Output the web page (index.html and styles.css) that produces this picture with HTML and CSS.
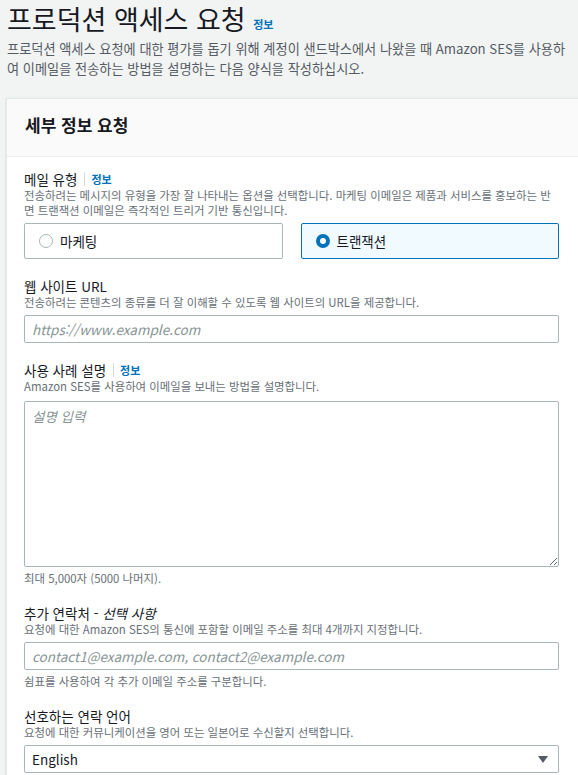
FILE: index.html
```html
<!DOCTYPE html>
<html lang="ko">
<head>
<meta charset="utf-8">
<title>프로덕션 액세스 요청</title>
<link rel="stylesheet" href="styles.css">
</head>
<body>
<div class="page">
  <header class="page-head">
    <h1 class="page-title">프로덕션 액세스 요청 <a class="info-link info-link--title" href="#">정보</a></h1>
    <p class="page-desc">프로덕션 액세스 요청에 대한 평가를 돕기 위해 계정이 샌드박스에서 나왔을 때 Amazon SES를 사용하여 이메일을 전송하는 방법을 설명하는 다음 양식을 작성하십시오.</p>
  </header>

  <section class="card">
    <div class="card-head">
      <h2 class="card-title">세부 정보 요청</h2>
    </div>
    <div class="card-body">
      <div class="field field--first">
        <div class="label-row"><span class="label">메일 유형</span><span class="divider"></span><a class="info-link" href="#">정보</a></div>
        <p class="desc">전송하려는 메시지의 유형을 가장 잘 나타내는 옵션을 선택합니다. 마케팅 이메일은 제품과 서비스를 홍보하는 반면 트랜잭션 이메일은 즉각적인 트리거 기반 통신입니다.</p>
        <div class="tiles">
          <label class="tile"><span class="radio"></span><span class="tile-text">마케팅</span></label>
          <label class="tile tile--on"><span class="radio radio--on"></span><span class="tile-text">트랜잭션</span></label>
        </div>
      </div>

      <div class="field">
        <div class="label-row"><span class="label">웹 사이트 URL</span></div>
        <p class="desc">전송하려는 콘텐츠의 종류를 더 잘 이해할 수 있도록 웹 사이트의 URL을 제공합니다.</p>
        <input class="input" type="text" placeholder="https://www.example.com">
      </div>

      <div class="field">
        <div class="label-row"><span class="label">사용 사례 설명</span><span class="divider"></span><a class="info-link" href="#">정보</a></div>
        <p class="desc">Amazon SES를 사용하여 이메일을 보내는 방법을 설명합니다.</p>
        <textarea class="textarea" placeholder="설명 입력"></textarea>
        <p class="hint">최대 5,000자 (5000 나머지).</p>
      </div>

      <div class="field">
        <div class="label-row"><span class="label">추가 연락처 - <i>선택 사항</i></span></div>
        <p class="desc">요청에 대한 Amazon SES의 통신에 포함할 이메일 주소를 최대 4개까지 지정합니다.</p>
        <input class="input" type="text" placeholder="contact1@example.com, contact2@example.com">
        <p class="hint">쉼표를 사용하여 각 추가 이메일 주소를 구분합니다.</p>
      </div>

      <div class="field">
        <div class="label-row"><span class="label">선호하는 연락 언어</span></div>
        <p class="desc">요청에 대한 커뮤니케이션을 영어 또는 일본어로 수신할지 선택합니다.</p>
        <div class="select">
          <span class="select-value">English</span>
          <svg class="caret" width="10" height="7" viewBox="0 0 10 7"><path d="M0 0 H10 L5 7 Z" fill="#545b64"/></svg>
        </div>
      </div>
    </div>
  </section>
</div>
</body>
</html>
```
FILE: styles.css
```css
html, body {
  margin: 0;
  padding: 0;
}
body {
  background: #f2f3f3;
  font-family: "Noto Sans CJK KR", "Open Sans", sans-serif;
  color: #16191f;
  overflow: hidden;
}
.page {
  width: 578px;
  height: 775px;
  overflow: hidden;
}
.page-head {
  padding: 3px 4px 0 7px;
}
.page-title {
  margin: 0;
  font-size: 27px;
  line-height: 32px;
  font-weight: 400;
  color: #16191f;
}
.info-link {
  font-size: 11px;
  font-weight: 700;
  color: #0073bb;
  text-decoration: none;
  letter-spacing: 0;
}
.info-link--title {
  margin-left: 0;
  line-height: 11px;
  vertical-align: 1px;
}
.page-desc {
  margin: 4px 0 0;
  font-size: 13.2px;
  line-height: 19.5px;
  color: #545b64;
}
.card {
  margin: 20px 0 0 6px;
  width: 600px;
  background: #fff;
  border-top: 1px solid #e4e8e8;
  border-left: 1px solid #e4e8e8;
  box-shadow: 0 1px 2px rgba(0, 28, 36, 0.15);
}
.card-head {
  background: #fafafa;
  border-bottom: 1px solid #eaeded;
  padding: 15px 18px 20px;
}
.card-title {
  margin: 0;
  font-size: 17px;
  line-height: 22px;
  font-weight: 700;
  color: #16191f;
}
.card-body {
  padding: 13px 17px 20px;
  width: 535px;
}
.field {
  margin-top: 18px;
}
.field--first {
  margin-top: 0;
}
.label-row {
  display: flex;
  align-items: center;
  height: 18px;
}
.label {
  font-size: 13.5px;
  line-height: 18px;
  color: #16191f;
}
.divider {
  width: 1px;
  height: 14px;
  background: #d5dbdb;
  margin: 0 6px 0 7px;
}
.desc {
  margin: 0;
  font-size: 11.4px;
  line-height: 15px;
  color: #687078;
}
.hint {
  margin: 4px 0 0;
  font-size: 11.4px;
  line-height: 15px;
  color: #687078;
}
.tiles {
  display: grid;
  grid-template-columns: 1fr 1fr;
  gap: 18px;
  margin-top: 5px;
}
.tile {
  display: flex;
  align-items: center;
  height: 36px;
  box-sizing: border-box;
  border: 1px solid #aab7b8;
  border-radius: 2px;
  padding-left: 14px;
  background: #fff;
}
.tile--on {
  border-color: #0073bb;
  background: #f1faff;
}
.radio {
  width: 14px;
  height: 14px;
  box-sizing: border-box;
  border: 1px solid #aab7b8;
  border-radius: 50%;
  background: #fff;
  margin-right: 7px;
}
.radio--on {
  border: 4px solid #0073bb;
}
.tile-text {
  font-size: 13.5px;
  color: #16191f;
}
.input, .textarea, .select {
  display: block;
  box-sizing: border-box;
  width: 100%;
  margin-top: 5px;
  border: 1px solid #aab7b8;
  border-radius: 2px;
  background: #fff;
  font-family: "Noto Sans CJK KR", "Open Sans", sans-serif;
  font-size: 13.5px;
  color: #16191f;
  outline: none;
}
.input {
  height: 28px;
  padding: 0 7px;
}
.input::placeholder, .textarea::placeholder {
  color: #879596;
  font-style: italic;
}
.textarea {
  height: 166px;
  margin-top: 7px;
  padding: 4px 7px;
  resize: vertical;
}
.select {
  height: 28px;
  padding: 0 10px 0 7px;
  display: flex;
  align-items: center;
  justify-content: space-between;
}
.caret {
  display: block;
}
```
